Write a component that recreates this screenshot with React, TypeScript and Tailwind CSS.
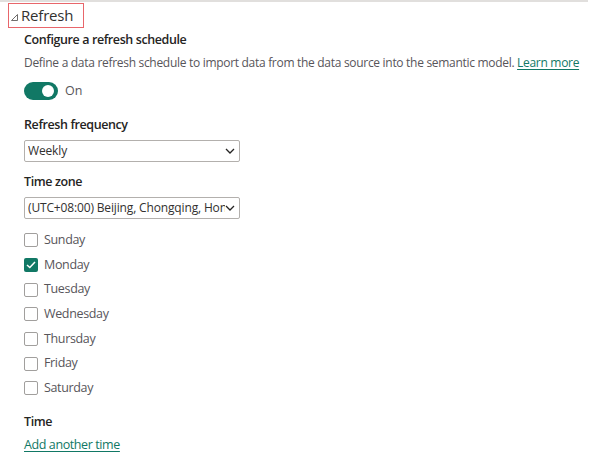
import React, { useState } from "react";

const days = ["Sunday", "Monday", "Tuesday", "Wednesday", "Thursday", "Friday", "Saturday"];

const Chevron = () => (
  <svg width="10" height="6" viewBox="0 0 10 6" className="shrink-0">
    <path d="M1 1 L5 5 L9 1" fill="none" stroke="#252423" strokeWidth="1.3" />
  </svg>
);

const SelectBox = ({ value }: { value: string }) => (
  <div className="flex items-center w-[216px] h-[22px] border border-[#b3b0ad] rounded-[2px] pl-[3px] pr-[4px] overflow-hidden">
    <span className="flex-1 whitespace-nowrap overflow-hidden text-[12px] tracking-[-0.15px] text-[#323130] leading-[20px]">{value}</span>
    <Chevron />
  </div>
);

const Label = ({ children }: { children: React.ReactNode }) => (
  <div className="text-[12.5px] font-semibold text-[#252423] leading-[18px] tracking-[-0.4px]">{children}</div>
);

export default function App() {
  const [checked, setChecked] = useState<string[]>(["Monday"]);
  const toggle = (d: string) =>
    setChecked((c) => (c.includes(d) ? c.filter((x) => x !== d) : [...c, d]));

  return (
    <div className="w-[602px] h-[460px] bg-white overflow-hidden font-['Open_Sans',sans-serif] text-[#323130]">
      <div className="w-[588px] h-[2px] bg-[#e1dfdd]" />
      <div className="ml-[8px] mt-[1px] w-[76px] h-[25px] border border-[#e8666b] flex items-center pl-[2px] gap-[3px]">
        <svg width="7" height="7" viewBox="0 0 7 7" className="mt-[3px]">
          <path d="M6.5 0.5 L6.5 6.5 L0.5 6.5 Z" fill="none" stroke="#605e5c" strokeWidth="0.9" />
        </svg>
        <span className="text-[15px] text-[#323130] leading-none tracking-[-0.2px]">Refresh</span>
      </div>
      <div className="pl-[24px]">
        <div className="mt-[3px]">
          <Label>Configure a refresh schedule</Label>
        </div>
        <div className="mt-[5px] text-[12px] text-[#57555a] leading-[18px] tracking-[-0.3px] whitespace-nowrap">
          Define a data refresh schedule to import data from the data source into the semantic model.{" "}
          <span className="text-[#117865] underline underline-offset-2">Learn more</span>
        </div>
        <div className="mt-[9px] flex items-center gap-[7px] h-[20px]">
          <div className="w-[34px] h-[18px] rounded-full bg-[#117865] flex items-center justify-end pr-[4px]">
            <div className="w-[12px] h-[12px] rounded-full bg-white" />
          </div>
          <span className="text-[12.5px] text-[#57555a]">On</span>
        </div>
        <div className="mt-[15px]">
          <Label>Refresh frequency</Label>
        </div>
        <div className="mt-[6px]">
          <SelectBox value="Weekly" />
        </div>
        <div className="mt-[11px]">
          <Label>Time zone</Label>
        </div>
        <div className="mt-[6px]">
          <SelectBox value="(UTC+08:00) Beijing, Chongqing, Hong Kong, Urumqi" />
        </div>
        <div className="mt-[9px] flex flex-col">
          {days.map((d) => {
            const on = checked.includes(d);
            return (
              <label key={d} className="flex items-center gap-[6px] h-[24.7px] cursor-pointer" onClick={() => toggle(d)}>
                <span
                  className={
                    on
                      ? "w-[14px] h-[14px] rounded-[2px] bg-[#117865] flex items-center justify-center"
                      : "w-[14px] h-[14px] rounded-[2px] border border-[#a19f9d] bg-white"
                  }
                >
                  {on && (
                    <svg width="10" height="8" viewBox="0 0 10 8">
                      <path d="M1 4 L3.8 6.5 L9 1" fill="none" stroke="white" strokeWidth="1.5" />
                    </svg>
                  )}
                </span>
                <span className="text-[12.5px] text-[#57555a] tracking-[-0.35px]">{d}</span>
              </label>
            );
          })}
        </div>
        <div className="mt-[12px]">
          <Label>Time</Label>
        </div>
        <div className="mt-[5px] text-[12.5px] text-[#117865] underline underline-offset-2 leading-[18px] tracking-[-0.4px]">Add another time</div>
      </div>
    </div>
  );
}
